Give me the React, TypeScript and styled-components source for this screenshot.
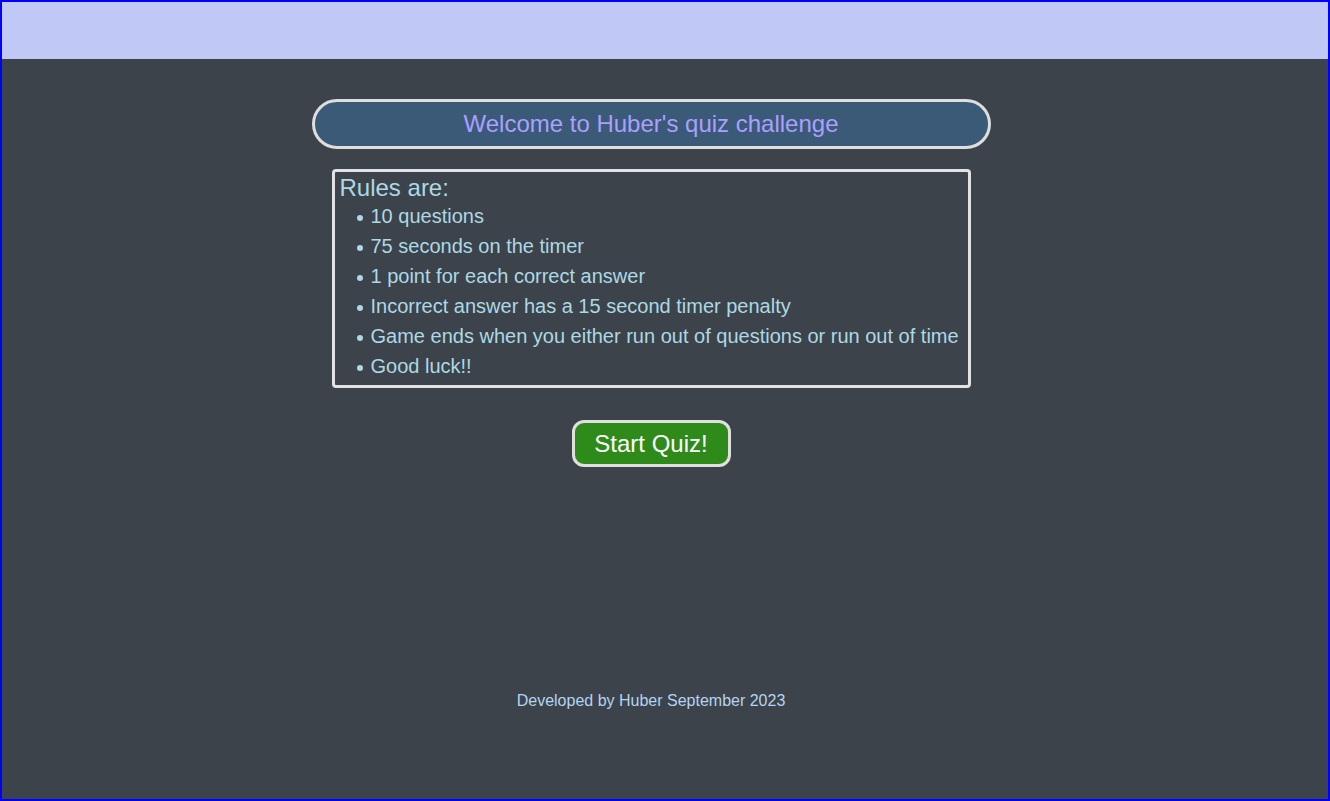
import React from 'react';
import styled, { createGlobalStyle } from 'styled-components';

const GlobalStyle = createGlobalStyle`
  * {
    box-sizing: border-box;
  }

  html, body {
    margin: 0;
    padding: 0;
  }

  body {
    font-family: "Liberation Sans", Arial, sans-serif;
    background-color: #3c434a;
  }
`;

const Page = styled.div`
  display: flex;
  flex-direction: column;
  height: 801px;
  border: 2px solid #0000ff;
  background-color: #3c434a;
`;

const TopBar = styled.header`
  height: 57px;
  background-color: #c0c8f6;
`;

const Main = styled.main`
  display: flex;
  flex-direction: column;
  align-items: center;
  padding: 40px 28px 0 0;
`;

const Welcome = styled.h1`
  width: 679px;
  height: 50px;
  margin: 0;
  border: 3px solid #dedede;
  border-radius: 25px;
  background-color: #3b5a77;
  color: #a9a0ff;
  font-size: 24px;
  font-weight: 400;
  line-height: 44px;
  text-align: center;
`;

const RulesCard = styled.section`
  width: 639px;
  margin-top: 20px;
  padding: 2px 5px 4px;
  border: 3px solid #e2e2e2;
  border-radius: 4px;
  color: #add8e6;
`;

const RulesTitle = styled.h2`
  margin: 0;
  font-size: 24px;
  font-weight: 400;
  line-height: 27px;
`;

const RuleList = styled.ul`
  list-style: none;
  margin: 0 0 0 17px;
  padding: 0;
`;

const Rule = styled.li`
  display: flex;
  align-items: center;
  gap: 8px;
  height: 30px;
  font-size: 20px;

  &::before {
    content: '';
    width: 6px;
    height: 6px;
    margin-top: 4px;
    border-radius: 50%;
    background-color: #add8e6;
  }
`;

const StartButton = styled.button`
  width: 159px;
  height: 47px;
  margin-top: 32px;
  border: 3px solid #e0e0e0;
  border-radius: 12px;
  background-color: #2e8b1a;
  color: #ffffff;
  font-family: inherit;
  font-size: 24px;
  cursor: pointer;
`;

const Footer = styled.footer`
  margin-top: 224px;
  padding-right: 28px;
  text-align: center;
  color: #b4d4f2;
  font-size: 16px;
  line-height: 20px;
`;

const rules = [
  '10 questions',
  '75 seconds on the timer',
  '1 point for each correct answer',
  'Incorrect answer has a 15 second timer penalty',
  'Game ends when you either run out of questions or run out of time',
  'Good luck!!',
];

export default function App() {
  return (
    <>
      <GlobalStyle />
      <Page>
        <TopBar />
        <Main>
          <Welcome>Welcome to Huber's quiz challenge</Welcome>
          <RulesCard>
            <RulesTitle>Rules are:</RulesTitle>
            <RuleList>
              {rules.map((rule) => (
                <Rule key={rule}>{rule}</Rule>
              ))}
            </RuleList>
          </RulesCard>
          <StartButton type="button">Start Quiz!</StartButton>
        </Main>
        <Footer>Developed by Huber September 2023</Footer>
      </Page>
    </>
  );
}
